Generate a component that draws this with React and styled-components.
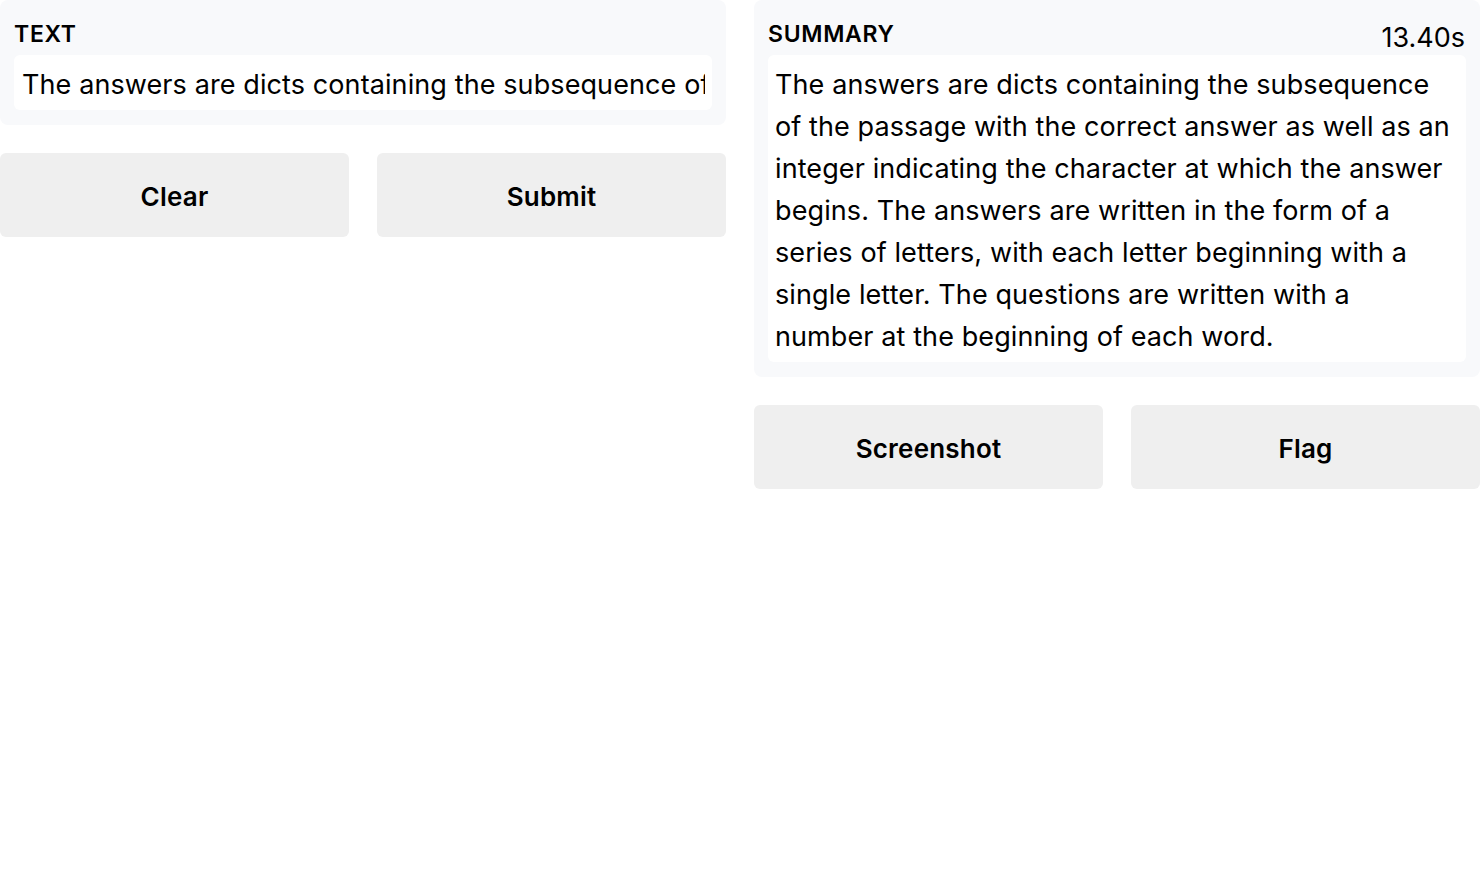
import React from "react";
import styled, { createGlobalStyle } from "styled-components";

const Global = createGlobalStyle`
  html, body { margin: 0; padding: 0; background: #ffffff; }
  body { font-family: Inter, "Liberation Sans", Arial, sans-serif; color: #000; }
  * { box-sizing: border-box; }
`;

const Page = styled.div`
  display: grid;
  grid-template-columns: minmax(0, 1fr) minmax(0, 1fr);
  column-gap: 28px;
  width: 1480px;
  align-items: start;
`;

const Column = styled.div`
  display: flex;
  flex-direction: column;
  gap: 28px;
  min-width: 0;
`;

const Panel = styled.div`
  position: relative;
  background: #f8f9fb;
  border-radius: 8px;
  padding: 21px 14px 15px 14px;
  display: flex;
  flex-direction: column;
  gap: 7px;
`;

const Label = styled.div`
  font-size: 23px;
  font-weight: 600;
  letter-spacing: 0.7px;
  line-height: 27px;
  text-transform: uppercase;
`;

const Timer = styled.div`
  position: absolute;
  top: 21px;
  right: 15px;
  font-size: 27px;
  line-height: 34px;
`;

const Input = styled.input`
  display: block;
  width: 100%;
  height: 55px;
  background: #ffffff;
  border: none;
  outline: none;
  border-radius: 6px;
  padding: 4px 7px 0 8px;
  font-family: Inter, "Liberation Sans", Arial, sans-serif;
  font-size: 27px;
  letter-spacing: 0.1px;
  color: #000;
`;

const Output = styled.div`
  background: #ffffff;
  border-radius: 6px;
  padding: 9px 12px 4px 7px;
  font-size: 27px;
  letter-spacing: 0.1px;
  line-height: 42px;
`;

const ButtonRow = styled.div`
  display: grid;
  grid-template-columns: minmax(0, 1fr) minmax(0, 1fr);
  gap: 28px;
`;

const Button = styled.button`
  height: 84px;
  border: none;
  border-radius: 6px;
  background: #efefef;
  font-family: Inter, "Liberation Sans", Arial, sans-serif;
  font-size: 26px;
  font-weight: 600;
  letter-spacing: 0.2px;
  color: #000;
  padding: 2px 0 0 0;
`;

const inputText =
  "The answers are dicts containing the subsequence of the passage with the correct answer as well as an integer indicating the character at which the answer begins.";

export default function App() {
  return (
    <>
      <Global />
      <Page>
        <Column>
          <Panel>
            <Label>Text</Label>
            <Input readOnly value={inputText} />
          </Panel>
          <ButtonRow>
            <Button>Clear</Button>
            <Button>Submit</Button>
          </ButtonRow>
        </Column>
        <Column>
          <Panel>
            <Label>Summary</Label>
            <Timer>13.40s</Timer>
            <Output>
              The answers are dicts containing the subsequence of the passage with the correct answer as well as an integer indicating the character at which the answer begins. The answers are written in the form of a series of letters, with each letter beginning with a single letter. The questions are written with a number at the beginning of each word.
            </Output>
          </Panel>
          <ButtonRow>
            <Button>Screenshot</Button>
            <Button>Flag</Button>
          </ButtonRow>
        </Column>
      </Page>
    </>
  );
}
